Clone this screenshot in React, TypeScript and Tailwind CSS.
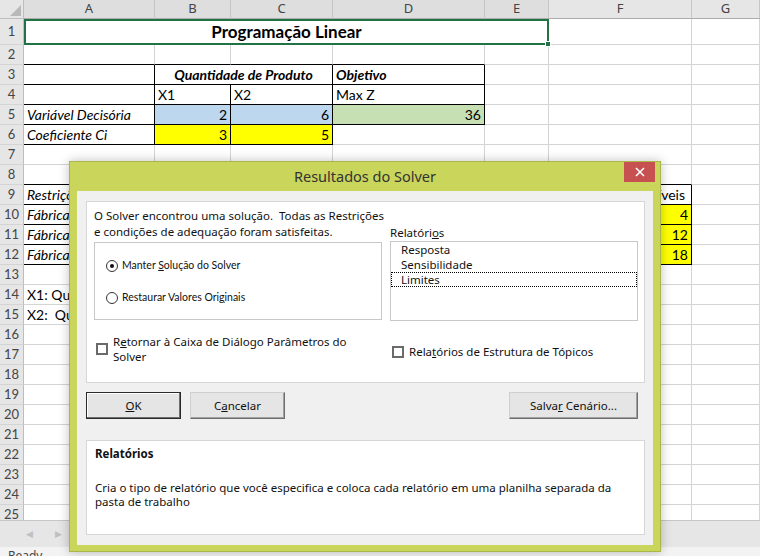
import React from "react";
import clsx from "clsx";

type Cell = {
  t?: string;
  cls?: string;
  bb?: boolean;
  br?: boolean;
  w?: string;
};

const COLS = [
  { k: "A", w: "w-[131px]" },
  { k: "B", w: "w-[76px]" },
  { k: "C", w: "w-[102px]" },
  { k: "D", w: "w-[152px]" },
  { k: "E", w: "w-[64px]" },
  { k: "F", w: "w-[143px]" },
  { k: "G", w: "w-[68px]" },
];

const blue = "bg-[#bdd7ee] justify-end";
const green = "bg-[#c6e0b4] justify-end";
const yellow = "bg-[#ffff00] justify-end";

// cells that differ from an empty gridline cell
const SHEET: Record<number, Record<string, Cell>> = {
  2: { A: { bb: true }, B: { bb: true }, C: { bb: true }, D: { bb: true } },
  3: {
    A: { bb: true, br: true },
    B: { t: "Quantidade de Produto", cls: "font-bold italic justify-center", bb: true, br: true, w: "w-[178px]" },
    C: { w: "hidden" },
    D: { t: "Objetivo", cls: "font-bold italic", bb: true, br: true },
  },
  4: {
    A: { bb: true, br: true },
    B: { t: "X1", bb: true, br: true },
    C: { t: "X2", bb: true, br: true },
    D: { t: "Max Z", bb: true, br: true },
  },
  5: {
    A: { t: "Variável Decisória", cls: "italic", bb: true, br: true },
    B: { t: "2", cls: blue, bb: true, br: true },
    C: { t: "6", cls: blue, bb: true, br: true },
    D: { t: "36", cls: green, bb: true, br: true },
  },
  6: {
    A: { t: "Coeficiente Ci", cls: "italic", bb: true, br: true },
    B: { t: "3", cls: yellow, bb: true, br: true },
    C: { t: "5", cls: yellow, bb: true, br: true },
  },
  8: { A: { bb: true }, F: { bb: true } },
  9: {
    A: { t: "Restrições", cls: "italic", bb: true, br: true },
    E: { br: true },
    F: { t: "Disponíveis", cls: "justify-end pr-[6px]", bb: true, br: true },
  },
  10: {
    A: { t: "Fábrica 1", cls: "italic", bb: true, br: true },
    E: { br: true },
    F: { t: "4", cls: yellow, bb: true, br: true },
  },
  11: {
    A: { t: "Fábrica 2", cls: "italic", bb: true, br: true },
    E: { br: true },
    F: { t: "12", cls: yellow, bb: true, br: true },
  },
  12: {
    A: { t: "Fábrica 3", cls: "italic", bb: true, br: true },
    E: { br: true },
    F: { t: "18", cls: yellow, bb: true, br: true },
  },
  14: { A: { t: "X1: Quantidade de produto 1" } },
  15: { A: { t: "X2:  Quantidade de produto 2" } },
};

const ROWS = Array.from({ length: 24 }, (_, i) => i + 2);

function RowHead({ n, tall }: { n: number; tall?: boolean }) {
  return (
    <div
      className={clsx(
        "w-[24px] shrink-0 flex items-center justify-center bg-[#e6e6e6] border-r border-b border-r-[#bdbdbd] border-b-[#d4d4d4] text-[13px] text-[#444]",
        tall ? "h-[26px]" : "h-[20px]"
      )}
    >
      {n}
    </div>
  );
}

function SheetRow({ n }: { n: number }) {
  const row = SHEET[n] || {};
  return (
    <div className="flex h-[20px]">
      <RowHead n={n} />
      {COLS.map((col) => {
        const c = row[col.k] || {};
        if (c.w === "hidden") return null;
        return (
          <div
            key={col.k}
            className={clsx(
              "shrink-0 h-[20px] flex items-end px-[3px] border-r border-b whitespace-pre leading-[18px]",
              c.w || col.w,
              c.bb ? "border-b-black" : "border-b-[#d4d4d4]",
              c.br ? "border-r-black" : "border-r-[#d4d4d4]",
              c.cls
            )}
          >
            {c.t}
          </div>
        );
      })}
    </div>
  );
}

function Radio({ on, children }: { on?: boolean; children: React.ReactNode }) {
  return (
    <div className="flex items-center gap-[4px] h-[16px]">
      <div className="w-[12px] h-[12px] rounded-full border border-[#333] bg-white flex items-center justify-center">
        {on && <div className="w-[4px] h-[4px] rounded-full bg-[#111]" />}
      </div>
      <span className="font-['Lato',sans-serif] text-[10.5px] text-[#111]">{children}</span>
    </div>
  );
}

function Check() {
  return <div className="w-[12px] h-[12px] shrink-0 border-2 border-[#6a6a6a] bg-white" />;
}

export default function App() {
  return (
    <div className="relative w-[760px] h-[556px] overflow-hidden bg-white font-['Lato',sans-serif] text-[14px] text-black">
      {/* column headers */}
      <div className="flex h-[19px] bg-[#e6e6e6] text-[13px] text-[#444] font-['Noto_Sans',sans-serif]">
        <div className="w-[24px] shrink-0 relative border-r border-b border-[#bdbdbd]">
          <div className="absolute right-[2px] bottom-[2px] w-0 h-0 border-l-[11px] border-l-transparent border-b-[11px] border-b-[#b8b8b8]" />
        </div>
        {COLS.map((c, i) => (
          <div
            key={c.k}
            className={clsx(
              c.w,
              "shrink-0 flex items-center justify-center border-r border-b border-r-[#c6c6c6] border-b-[#ababab]",
              i < 5 ? "bg-[#dedede]" : "bg-[#e6e6e6]"
            )}
          >
            {c.k}
          </div>
        ))}
      </div>

      {/* sheet body */}
      <div className="h-[501px] overflow-hidden">
        <div className="flex h-[26px]">
          <RowHead n={1} tall />
          <div className="relative w-[525px] shrink-0 flex items-center justify-center border-2 border-[#217346] text-[17px] font-bold">
            Programação Linear
            <div className="absolute right-[-4px] bottom-[-4px] w-[6px] h-[6px] bg-[#217346] border border-white" />
          </div>
          <div className="w-[143px] shrink-0 border-r border-b border-[#d4d4d4]" />
          <div className="w-[68px] shrink-0 border-r border-b border-[#d4d4d4]" />
        </div>
        {ROWS.map((n) => (
          <SheetRow key={n} n={n} />
        ))}
      </div>

      {/* sheet tabs bar */}
      <div className="h-[27px] bg-[#e6e6e6] border-t border-[#c6c6c6] flex items-center text-[9px] text-[#c0c0c0]">
        <span className="ml-[26px]">◀</span>
        <span className="ml-[22px]">▶</span>
      </div>
      <div className="h-[9px] bg-[#f3f3f3] overflow-hidden font-['Noto_Sans',sans-serif] text-[12px] text-[#444] pl-[8px] leading-[18px]">
        Ready
      </div>

      {/* Solver results dialog */}
      <div className="absolute left-[69px] top-[161px] w-[592px] h-[391px] bg-[#c9d55b] border border-[#a9b648] flex flex-col shadow-[0_0_10px_rgba(0,0,0,0.25)] font-['Noto_Sans',sans-serif] text-[11.5px] text-[#111]">
        <div className="relative h-[29px] shrink-0 flex items-center justify-center">
          <span className="text-[14.5px] text-[#333]">Resultados do Solver</span>
          <div className="absolute right-[5px] top-0 w-[31px] h-[20px] bg-[#c75050] flex items-center justify-center">
            <svg width="10" height="10" viewBox="0 0 10 10">
              <path d="M1 1 L9 9 M9 1 L1 9" stroke="#fff" strokeWidth="1.6" />
            </svg>
          </div>
        </div>

        <div className="mx-[7px] mb-[6px] flex-1 bg-[#f0f0f0] pl-[9px] pr-[8px] pt-[10px] flex flex-col">
          {/* top panel */}
          <div className="h-[182px] bg-white border border-[#d6d6d6] pl-[7px] pr-[6px] pt-[6px]">
            <div className="h-[16px] leading-[16px] whitespace-pre">O Solver encontrou uma solução.  Todas as Restrições</div>
            <div className="flex gap-[8px]">
              <div className="w-[288px] shrink-0">
                <div className="h-[16px] leading-[16px] whitespace-nowrap">e condições de adequação foram satisfeitas.</div>
                <div className="mt-[2px] h-[78px] border border-[#c8c8c8] pl-[11px] pt-[15px] flex flex-col gap-[16px]">
                  <Radio on>
                    Manter <u>S</u>olução do Solver
                  </Radio>
                  <Radio>
                    Restaurar Valores Ori<u>g</u>inais
                  </Radio>
                </div>
              </div>
              <div className="w-[248px] shrink-0">
                <div className="h-[16px] leading-[18px]">
                  Relatóri<u>o</u>s
                </div>
                <div className="mt-[1px] h-[80px] border border-[#c8c8c8] leading-[15px]">
                  <div className="h-[15px] pl-[10px]">Resposta</div>
                  <div className="h-[15px] pl-[10px]">Sensibilidade</div>
                  <div className="h-[15px] pl-[9px] border border-dotted border-black leading-[13px]">Limites</div>
                </div>
              </div>
            </div>
            <div className="flex gap-[8px] mt-[13px]">
              <div className="w-[288px] shrink-0 flex items-start gap-[5px] pl-[2px]">
                <div className="mt-[9px]">
                  <Check />
                </div>
                <div className="leading-[15px]">
                  R<u>e</u>tornar à Caixa de Diálogo Parâmetros do
                  <br />
                  Solver
                </div>
              </div>
              <div className="flex items-center gap-[5px] pl-[2px] pt-[10px] h-[25px]">
                <Check />
                <span className="leading-[15px]">
                  Rela<u>t</u>órios de Estrutura de Tópicos
                </span>
              </div>
            </div>
          </div>

          {/* buttons */}
          <div className="mt-[9px] h-[27px] flex">
            <div className="w-[95px] flex items-center justify-center bg-[#e5e5e5] border border-[#2a2a2a] shadow-[inset_-1px_-1px_0_#6e6e6e,inset_1px_1px_0_#ffffff]">
              <span>
                <u>O</u>K
              </span>
            </div>
            <div className="ml-[9px] w-[95px] flex items-center justify-center bg-[#e5e5e5] border border-[#cfcfcf] border-r-[#6e6e6e] border-b-[#6e6e6e] shadow-[inset_-1px_-1px_0_#a0a0a0]">
              <span>
                C<u>a</u>ncelar
              </span>
            </div>
            <div className="ml-auto mr-[7px] w-[129px] flex items-center justify-center bg-[#e5e5e5] border border-[#cfcfcf] border-r-[#6e6e6e] border-b-[#6e6e6e] shadow-[inset_-1px_-1px_0_#a0a0a0]">
              <span>
                Salva<u>r</u> Cenário...
              </span>
            </div>
          </div>

          {/* help panel */}
          <div className="mt-[21px] h-[95px] bg-white border border-[#d6d6d6] pl-[8px] pr-[8px] pt-[5px]">
            <div className="font-bold h-[16px] leading-[16px]">Relatórios</div>
            <div className="mt-[19px] leading-[14px]">
              Cria o tipo de relatório que você especifica e coloca cada relatório em uma planilha separada da
              <br />
              pasta de trabalho
            </div>
          </div>
        </div>
      </div>
    </div>
  );
}
